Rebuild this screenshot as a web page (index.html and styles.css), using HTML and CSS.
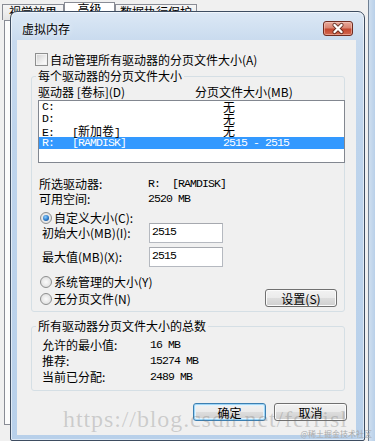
FILE: index.html
```html
<!DOCTYPE html>
<html lang="zh-CN">
<head>
<meta charset="utf-8">
<title>虚拟内存</title>
<link rel="stylesheet" href="styles.css">
</head>
<body>
<div class="desktop">
  <div class="parent">
    <div class="tabs">
      <div class="tab t1">视觉效果</div>
      <div class="tab t2 sel">高级</div>
      <div class="tab t3">数据执行保护</div>
    </div>
    <div class="panel"></div>
  </div>
  <div class="pframe"></div>

  <div class="dialog">
    <div class="titlebar">
      <span class="title">虚拟内存</span>
      <span class="close">
        <svg width="28" height="13" viewBox="0 0 28 13">
          <path d="M10.5 3 L17.5 10 M17.5 3 L10.5 10" stroke="#4a1f16" stroke-width="4.2" stroke-linecap="round" opacity="0.75"/>
          <path d="M10.5 3 L17.5 10 M17.5 3 L10.5 10" stroke="#ffffff" stroke-width="2.4" stroke-linecap="round"/>
        </svg>
      </span>
    </div>
    <div class="client">
      <div class="chkrow"><span class="chk"></span><span class="lbl">自动管理所有驱动器的分页文件大小(A)</span></div>

      <fieldset class="grp g1">
        <legend>每个驱动器的分页文件大小</legend>
        <div class="cols"><span>驱动器 [卷标](D)</span><span>分页文件大小(MB)</span></div>
        <div class="list">
          <div class="row"><span class="m">C:</span><span class="cj">无</span></div>
          <div class="row"><span class="m">D:</span><span class="cj">无</span></div>
          <div class="row"><span class="m">E:   [<span class="cj">新加卷</span>]</span><span class="cj">无</span></div>
          <div class="row sel"><span class="m">R:   [RAMDISK]</span><span class="m">2515 - 2515</span></div>
        </div>
        <div class="info">
          <span>所选驱动器:</span><span class="m">R:  [RAMDISK]</span>
          <span>可用空间:</span><span class="m">2520 MB</span>
        </div>
        <div class="radio r1"><span class="rb on"></span><span class="lbl">自定义大小(C):</span></div>
        <div class="sizes">
          <span>初始大小(MB)(I):</span><input class="field" type="text" value="2515">
          <span>最大值(MB)(X):</span><input class="field" type="text" value="2515">
        </div>
        <div class="lower">
          <div class="radios">
            <div class="radio"><span class="rb"></span><span class="lbl">系统管理的大小(Y)</span></div>
            <div class="radio"><span class="rb"></span><span class="lbl">无分页文件(N)</span></div>
          </div>
          <button class="btn set">设置(S)</button>
        </div>
      </fieldset>

      <fieldset class="grp g2">
        <legend>所有驱动器分页文件大小的总数</legend>
        <div class="totals">
          <span>允许的最小值:</span><span class="m">16 MB</span>
          <span>推荐:</span><span class="m">15274 MB</span>
          <span>当前已分配:</span><span class="m">2489 MB</span>
        </div>
      </fieldset>

      <div class="actions">
        <button class="btn def">确定</button>
        <button class="btn">取消</button>
      </div>
    </div>
  </div>

  <div class="watermark">https://blog.csdn.net/ferrisl</div>
  <div class="credit">@稀土掘金技术社区</div>
</div>
</body>
</html>
```

FILE: styles.css
```css
* { box-sizing: border-box; }
html, body { margin: 0; padding: 0; }
body {
  width: 375px;
  height: 442px;
  overflow: hidden;
  font-family: "Noto Sans CJK SC", sans-serif;
  font-size: 12px;
  color: #000;
  background: #fff;
}
.desktop {
  position: relative;
  width: 375px;
  height: 442px;
  display: flex;
  background: #fff;
}

/* parent window (background) */
.parent {
  width: 369px;
  height: 441px;
  background: #f0f0f0;
  border-right: 1px solid #6f7f92;
}
.pframe {
  flex: 1;
  height: 441px;
  background: linear-gradient(90deg, #cfdff0, #b9d0e9);
}
.tabs {
  display: flex;
  align-items: flex-end;
  height: 20px;
  padding-left: 2px;
}
.tab {
  height: 16px;
  border: 1px solid #898c95;
  border-bottom: 0;
  background: linear-gradient(#f6f6f6, #e5e5e5);
  line-height: 13px;
  text-align: center;
  font-size: 12px;
}
.t1 { width: 62px; }
.t2 { width: 51px; }
.t3 { width: 82px; }
.tab.sel {
  height: 18px;
  background: #fff;
  line-height: 12px;
}
.panel {
  margin-left: 4px;
  margin-right: 8px;
  height: 405px;
  border: 1px solid #898c95;
  background: #fcfcfc;
}

/* dialog window */
.dialog {
  position: absolute;
  left: 10px;
  top: 11px;
  width: 355px;
  height: 430px;
  border: 1px solid #3e4d61;
  border-radius: 7px 7px 2px 2px;
  background: linear-gradient(180deg, #dce8f5 0, #c8daee 30px, #bed4ec 120px, #b8d0ea 100%);
  box-shadow: inset 0 0 0 1px rgba(255,255,255,0.55);
  display: flex;
  flex-direction: column;
  padding: 0 8px 5px 6px;
}
.titlebar {
  height: 28px;
  display: flex;
  align-items: flex-start;
  padding-top: 9px;
}
.title {
  flex: 1;
  margin-left: 5px;
  line-height: 16px;
  font-size: 12px;
  text-shadow: 0 0 6px rgba(255,255,255,0.9);
}
.close {
  width: 30px;
  height: 15px;
  margin-right: 3px;
  border: 1px solid #6e2b20;
  border-radius: 3px;
  background: linear-gradient(180deg, #e7a99b 0, #d98572 45%, #c4472f 55%, #d2684f 100%);
  box-shadow: inset 0 0 0 1px rgba(255,220,210,0.45);
  display: flex;
}
.close svg { display: block; }

.client {
  flex: 1;
  background: #f0f0f0;
  display: flex;
  flex-direction: column;
  align-items: flex-start;
}

.chkrow {
  margin: 13px 0 0 18px;
  height: 13px;
  display: flex;
  align-items: center;
  line-height: 13px;
}
.chk {
  width: 13px;
  height: 13px;
  border: 1px solid #8e8f8f;
  background: linear-gradient(135deg, #cfcfcf, #f4f4f4 70%, #fff);
  box-shadow: inset 0 0 0 1px #f2f2f2;
}
.chkrow .lbl { margin-left: 2px; }

/* group boxes */
.grp {
  margin: 4px 0 0 14px;
  width: 314px;
  border: 1px solid #d5dfe5;
  border-radius: 3px;
  padding: 0 0 4px 6px;
  min-width: 0;
}
.grp legend {
  padding: 0 2px;
  margin-left: -2px;
  line-height: 12px;
  font-size: 12px;
}
.g2 {
  margin-top: 8px;
  padding-bottom: 5px;
}

.cols {
  margin-top: 4px;
  height: 12px;
  line-height: 12px;
  display: grid;
  grid-template-columns: 157px auto;
}

.list {
  margin: 2px -1px 0 0;
  height: 63px;
  border: 1px solid #828790;
  background: #fff;
}
.row {
  height: 12px;
  line-height: 12px;
  padding-left: 3px;
  display: grid;
  grid-template-columns: 181px auto;
}
.row.sel {
  background: #3399ff;
  color: #fff;
}

.m {
  font-family: "Liberation Mono", monospace;
  font-size: 11.5px;
  letter-spacing: -0.9px;
  white-space: pre;
}
.cj {
  font-family: "Noto Sans CJK SC", sans-serif;
  font-size: 12px;
  letter-spacing: 0;
}

.info {
  margin: 13px 0 0 1px;
  display: grid;
  grid-template-columns: 109px auto;
  grid-auto-rows: 15px;
  line-height: 15px;
}

.radio {
  height: 12px;
  display: flex;
  align-items: center;
  line-height: 12px;
  margin-left: 2px;
}
.rb {
  width: 12px;
  height: 12px;
  border-radius: 50%;
  border: 1px solid #8e8f8f;
  background: radial-gradient(circle at 50% 50%, #fbfbfb 0, #e6e6e6 60%, #cfcfcf 100%);
  display: flex;
  align-items: center;
  justify-content: center;
}
.rb.on::after {
  content: "";
  width: 6px;
  height: 6px;
  border-radius: 50%;
  background: radial-gradient(circle at 40% 35%, #8fd0ff 0, #2a78c8 55%, #123f78 100%);
}
.radio .lbl { margin-left: 2px; }
.r1 { margin-top: 6px; }

.sizes {
  margin: -1px 0 0 4px;
  display: grid;
  grid-template-columns: 107px 74px;
  grid-auto-rows: 20px;
  row-gap: 4px;
  align-items: center;
  line-height: 14px;
}
.sizes > span { align-self: start; padding-top: 3px; }
.field {
  width: 74px;
  height: 20px;
  margin: 0;
  border: 1px solid #b5b9c0;
  border-top-color: #a6a9af;
  background: #fff;
  padding: 1px 0 4px 2px;
  font-family: "Liberation Mono", monospace;
  font-size: 11.5px;
  letter-spacing: -0.9px;
  color: #000;
  outline: none;
}

.lower {
  margin-top: 9px;
  align-self: stretch;
  display: flex;
  justify-content: space-between;
  align-items: flex-end;
  padding-right: 7px;
}
.radios {
  display: flex;
  flex-direction: column;
  gap: 5px;
  padding-bottom: 2px;
}

.btn {
  height: 18px;
  margin: 0;
  padding: 0;
  border: 1px solid #707070;
  border-radius: 3px;
  background: linear-gradient(180deg, #f2f2f2 0, #ebebeb 48%, #dddddd 52%, #cfcfcf 100%);
  box-shadow: inset 0 0 0 1px #fbfbfb;
  font-family: "Noto Sans CJK SC", sans-serif;
  font-size: 12px;
  line-height: 15px;
  color: #000;
}
.set { width: 72px; }

.totals {
  margin: 5px 0 0 4px;
  display: grid;
  grid-template-columns: 108px auto;
  grid-auto-rows: 16px;
  line-height: 16px;
}

.actions {
  margin-top: 12px;
  align-self: stretch;
  display: flex;
  justify-content: flex-end;
  gap: 8px;
  padding-right: 9px;
}
.actions .btn { width: 73px; }
.btn.def {
  border-color: #3c7fb1;
  box-shadow: inset 0 0 0 1px #9fd5f6, inset 0 0 0 2px #e2f3fd;
}

/* overlays */
.watermark {
  position: absolute;
  left: 63px;
  top: 407px;
  font-family: "Liberation Serif", serif;
  font-size: 24px;
  line-height: 24px;
  letter-spacing: 0.9px;
  color: rgba(110,110,110,0.28);
  white-space: nowrap;
  pointer-events: none;
}
.credit {
  position: absolute;
  right: 3px;
  top: 429px;
  font-size: 8px;
  line-height: 10px;
  color: #a9a9a9;
  white-space: nowrap;
}
```
